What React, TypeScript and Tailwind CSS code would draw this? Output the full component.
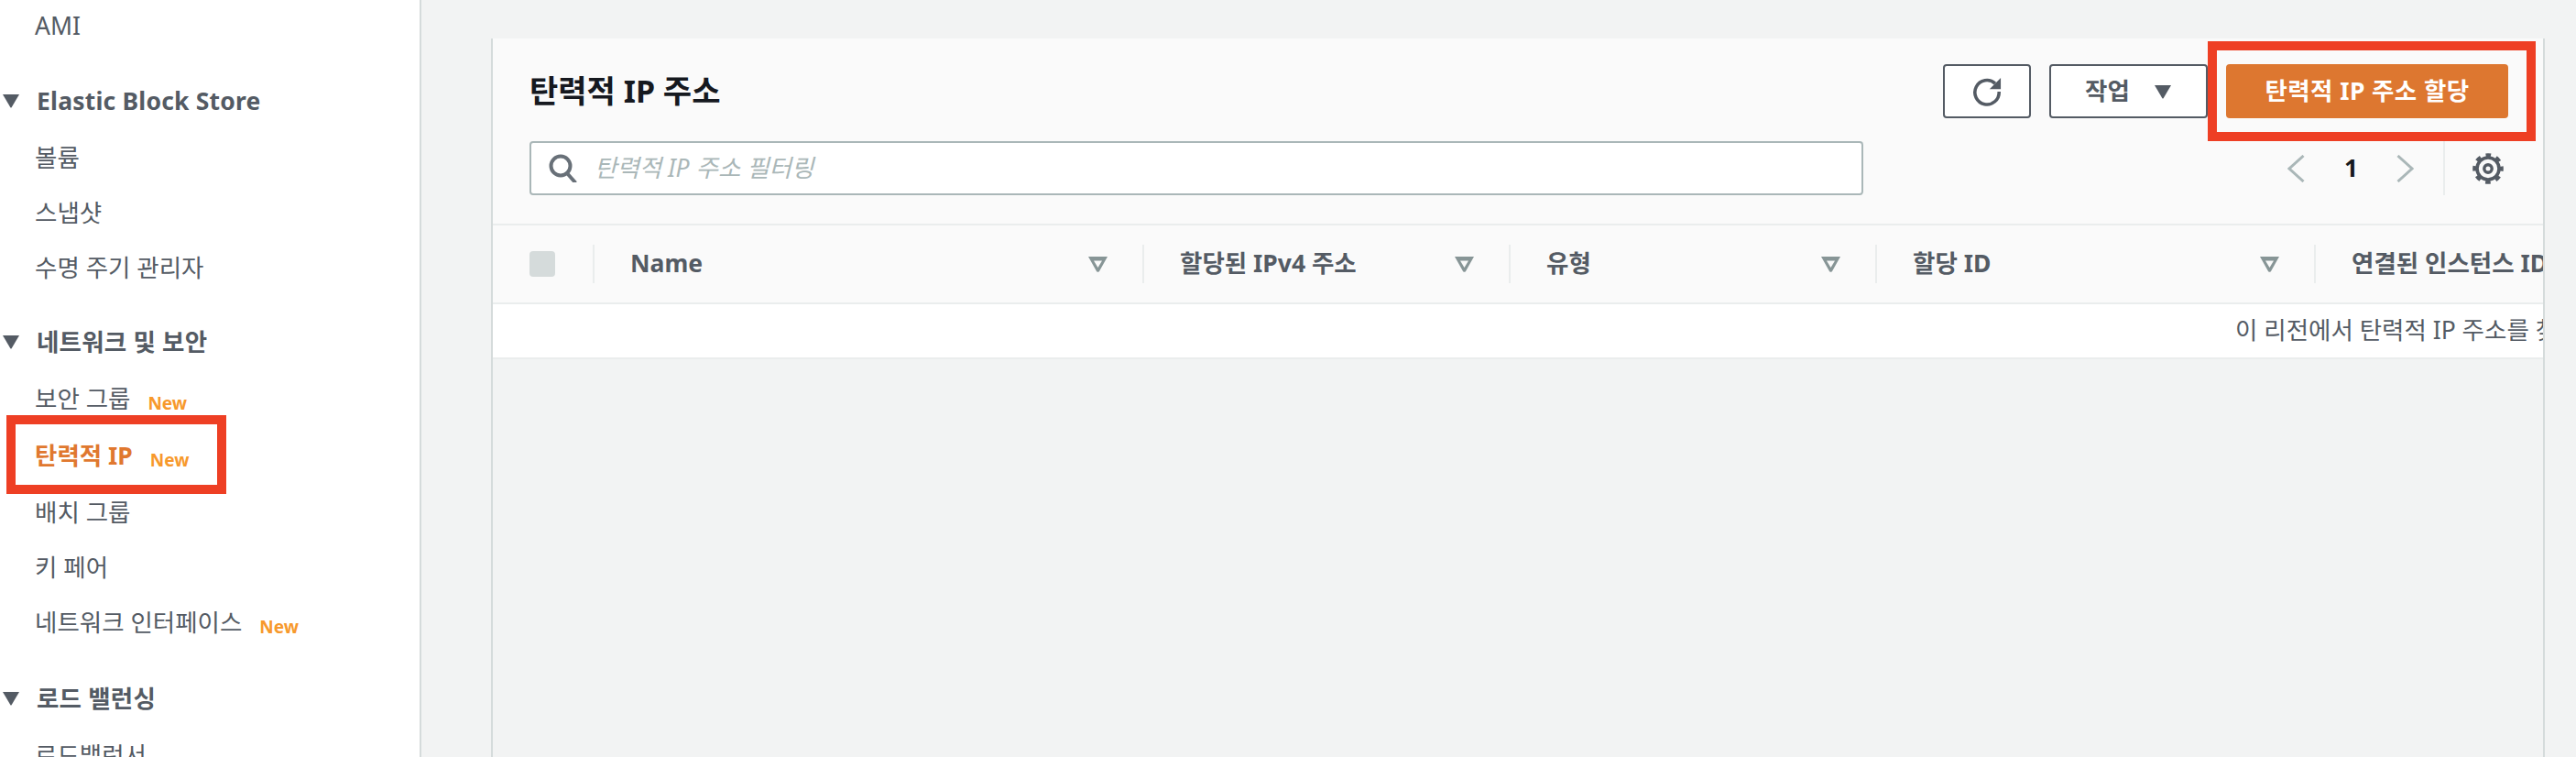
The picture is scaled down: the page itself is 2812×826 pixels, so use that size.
const FONT = 'font-["Noto_Sans","Noto_Sans_CJK_KR",sans-serif]'

function Caret({ className }: { className: string }) {
  return (
    <svg viewBox="0 0 20 16" className={className} fill="currentColor">
      <path d="M1 1h18L10.6 15.2a.8.8 0 0 1-1.2 0z" />
    </svg>
  )
}

function NewTag({ inset = 'pb-[13px]' }: { inset?: string }) {
  return <span className={`ml-[19px] self-end text-[19px] leading-[24px] font-bold text-[#f7992c] ${inset}`}>New</span>
}

function NavHeader({ label, gap }: { label: string; gap: string }) {
  return (
    <div className={`mb-[2px] flex h-[60px] items-center font-bold ${gap}`}>
      <Caret className="ml-[2px] h-[16px] w-[20px] text-[#545b64]" />
      <span className="ml-[18px] tracking-[0.2px]">{label}</span>
    </div>
  )
}

function NavItem({ label, isNew }: { label: string; isNew?: boolean }) {
  return (
    <div className="flex h-[60px] items-center pl-[38px]">
      <span>{label}</span>
      {isNew && <NewTag />}
    </div>
  )
}

function Sidebar() {
  return (
    <aside className="w-[460px] shrink-0 border-r-[2px] border-[#d5dbdb] bg-white text-[26.5px] leading-[36px] text-[#545b64]">
      <div className="-mt-[2px]">
        <NavItem label="AMI" />
        <NavHeader label="Elastic Block Store" gap="mt-[22px]" />
        <NavItem label="볼륨" />
        <NavItem label="스냅샷" />
        <NavItem label="수명 주기 관리자" />
        <NavHeader label="네트워크 및 보안" gap="mt-[21px]" />
        <NavItem label="보안 그룹" isNew />
        <div className="relative flex h-[64px] items-center pl-[38px]">
          <span className="font-bold text-[#e0782f]">탄력적 IP</span>
          <NewTag inset="pb-[15px]" />
          <div className="absolute top-[-12px] left-[7px] h-[86px] w-[240px] border-[10px] border-[#ee3f24]" />
        </div>
        <NavItem label="배치 그룹" />
        <NavItem label="키 페어" />
        <NavItem label="네트워크 인터페이스" isNew />
        <NavHeader label="로드 밸런싱" gap="mt-[23px]" />
        <NavItem label="로드밸런서" />
      </div>
    </aside>
  )
}

function FilterIcon() {
  return (
    <svg viewBox="0 0 21 17" className="ml-auto h-[17px] w-[21px] shrink-0">
      <path d="M0 0h21L12 16a2 2 0 0 1-3 0z" fill="#879596" />
      <path d="M6 4.5h9L10.5 12z" fill="#fafafa" />
    </svg>
  )
}

const columns = [
  { label: 'Name', width: 'w-[600px]' },
  { label: '할당된 IPv4 주소', width: 'w-[400px]' },
  { label: '유형', width: 'w-[400px]' },
  { label: '할당 ID', width: 'w-[479px]' },
]

function Column({ label, width }: { label: string; width: string }) {
  return (
    <div className={`flex h-[42px] shrink-0 items-center border-l-[2px] border-[#eaeded] pr-[38px] pl-[39px] ${width}`}>
      <span className="whitespace-nowrap">{label}</span>
      <FilterIcon />
    </div>
  )
}

function Toolbar() {
  return (
    <div className="border-b-[2px] border-[#eaeded] pt-[28px] pr-[38px] pb-[31px] pl-[40px]">
      <div className="flex h-[59px] items-center">
        <h1 className="text-[34px] font-bold text-[#16191f]">탄력적 IP 주소</h1>
        <div className="ml-auto flex gap-[20px] text-[26.5px] font-bold">
          <button type="button" className="flex h-[59px] w-[96px] items-center justify-center rounded-[4px] border-[2px] border-[#545b64] bg-white">
            <svg viewBox="0 0 34 34" className="h-[32px] w-[32px]" fill="none" stroke="#545b64" strokeWidth="3.8">
              <path d="M26.5 7.5A14 14 0 1 0 31 17" />
              <path d="M33 1v13H20z" fill="#545b64" stroke="none" />
            </svg>
          </button>
          <button type="button" className="flex h-[59px] w-[173px] items-center justify-center gap-[26px] rounded-[4px] border-[2px] border-[#545b64] bg-white text-[#545b64]">
            <span>작업</span>
            <Caret className="h-[16px] w-[20px]" />
          </button>
          <div className="relative">
            <button type="button" className="h-[59px] w-[308px] rounded-[4px] bg-[#dd7730] tracking-[0.4px] text-white">
              탄력적 IP 주소 할당
            </button>
            <div className="absolute top-[-25px] left-[-20px] h-[109px] w-[358px] border-[10px] border-[#ee3f24]" />
          </div>
        </div>
      </div>
      <div className="mt-[25px] flex h-[59px]">
        <div className="flex w-[1456px] items-center rounded-[4px] border-[2px] border-[#aab7b8] bg-white pl-[19px]">
          <svg viewBox="0 0 31 31" className="h-[31px] w-[31px]" fill="none" stroke="#687078" strokeWidth="4">
            <circle cx="13" cy="13" r="10.5" />
            <path d="M20 21l8 9" strokeLinecap="square" />
          </svg>
          <span className="ml-[19px] text-[26.5px] text-[#aab7b8] italic">탄력적 IP 주소 필터링</span>
        </div>
        <div className="ml-[463px] flex items-center">
          <svg viewBox="0 0 19 30" className="h-[30px] w-[19px]" fill="none" stroke="#aab7b8" strokeWidth="3">
            <path d="M17.5 1 2 15l15.5 14" />
          </svg>
          <span className="ml-[43px] w-[16px] text-[26.5px] font-bold text-[#16191f]">1</span>
          <svg viewBox="0 0 19 30" className="ml-[41px] h-[30px] w-[19px]" fill="none" stroke="#aab7b8" strokeWidth="3">
            <path d="M1.5 1 17 15 1.5 29" />
          </svg>
          <div className="ml-[32px] h-full border-l-[2px] border-[#eaeded]" />
          <svg viewBox="0 0 34 34" className="ml-[30px] h-[34px] w-[34px]" fill="none" stroke="#545b64">
            <circle cx="17" cy="17" r="12" strokeWidth="3.6" />
            <circle cx="17" cy="17" r="14.8" strokeWidth="4" strokeDasharray="5.6 6" strokeDashoffset="2.8" />
            <circle cx="17" cy="17" r="4.2" strokeWidth="3.4" />
          </svg>
        </div>
      </div>
    </div>
  )
}

export default function App() {
  return (
    <div className={`flex h-screen overflow-hidden bg-[#f2f3f3] ${FONT}`}>
      <Sidebar />
      <main className="min-w-0 flex-1 pt-[42px] pr-[34px] pl-[76px]">
        <section className="h-full overflow-hidden border-x-[2px] border-[#d5dbdb] bg-[#f2f3f3]">
          <div className="bg-[#fafafa]">
            <Toolbar />
            <div className="flex h-[86px] items-center overflow-hidden border-b-[2px] border-[#eaeded] text-[26.5px] font-bold text-[#545b64]">
              <div className="w-[109px] shrink-0 pl-[40px]">
                <div className="h-[28px] w-[28px] rounded-[4px] bg-[#d5dbdb]" />
              </div>
              {columns.map(c => (
                <Column key={c.label} {...c} />
              ))}
              <div className="flex h-[42px] shrink-0 items-center border-l-[2px] border-[#eaeded] pl-[39px] whitespace-nowrap">
                연결된 인스턴스 ID
              </div>
            </div>
          </div>
          <div className="flex h-[60px] items-center overflow-hidden border-b-[2px] border-[#eaeded] bg-white pl-[1902px] text-[26.5px] whitespace-nowrap text-[#545b64]">
            이 리전에서 탄력적 IP 주소를 찾을 수 없습니다
          </div>
        </section>
      </main>
    </div>
  )
}
